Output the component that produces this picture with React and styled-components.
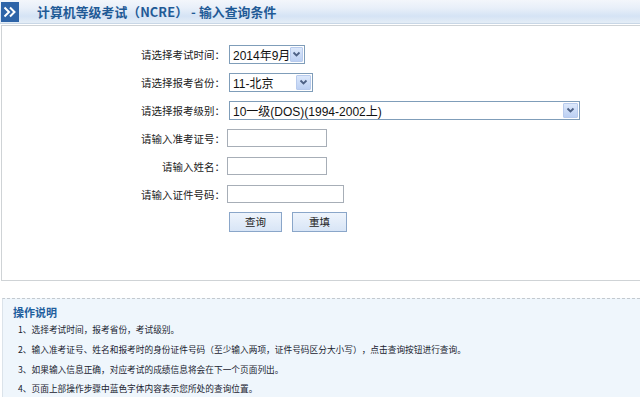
import React from "react";
import styled, { createGlobalStyle } from "styled-components";

const Global = createGlobalStyle`
  html, body { margin: 0; padding: 0; background: #fff; }
  body { width: 640px; height: 397px; overflow: hidden; font-family: "Liberation Sans", "Noto Sans CJK SC", sans-serif; text-spacing-trim: space-all; }
`;

const Page = styled.div`
  width: 640px;
  height: 397px;
  display: flex;
  flex-direction: column;
  overflow: hidden;
`;

const Header = styled.div`
  flex-shrink: 0;
  height: 24px;
  display: flex;
  align-items: center;
  background: linear-gradient(#f3f6fb 0%, #e8eff9 35%, #d5e3f5 70%, #e4edf6 100%);
  border-bottom: 1px solid #c9d7e6;
  box-sizing: border-box;
`;

const IconBox = styled.div`
  width: 18px;
  height: 20px;
  margin-left: 1px;
  background: #2e64a8;
  display: flex;
  align-items: center;
  justify-content: center;
`;

const Title = styled.h1`
  margin: 0 0 0 18px;
  font-family: "Noto Sans CJK SC", sans-serif;
  font-size: 12.8px;
  font-weight: 700;
  color: #1f5a96;
  letter-spacing: 0.1px;
  white-space: pre;
`;

const Main = styled.div`
  flex-shrink: 0;
  margin: 1px 0 0 1px;
  height: 256px;
  border: 1px solid #cfd3d6;
  border-right: none;
  box-sizing: border-box;
  padding-top: 14px;
`;

const Form = styled.div`
  display: grid;
  grid-template-columns: 224px 1fr;
  grid-auto-rows: 28px;
  align-items: center;
`;

const Label = styled.div`
  text-align: right;
  font-family: "Noto Sans CJK SC", sans-serif;
  font-size: 10.5px;
  color: #222;
  margin-right: 1px;
  white-space: nowrap;
`;

const Field = styled.div`
  display: flex;
  align-items: center;
  padding-left: ${(p) => p.$pl ?? 2}px;
  gap: 10px;
`;

const SelectBox = styled.div`
  width: ${(p) => p.$w}px;
  height: 19px;
  box-sizing: border-box;
  border: 1px solid #7f9db9;
  background: #fff;
  display: flex;
  align-items: center;
  justify-content: space-between;
  padding: 0 1px 0 3px;
`;

const SelectText = styled.span`
  font-family: "Liberation Sans", "Noto Sans CJK SC", sans-serif;
  font-size: 12px;
  color: #111;
  white-space: nowrap;
`;

const Arrow = styled.span`
  width: 15px;
  height: 15px;
  box-sizing: border-box;
  background: linear-gradient(#dce8fb, #bcd0f3);
  border: 1px solid #b8cbed;
  border-radius: 1px;
  display: flex;
  align-items: center;
  justify-content: center;
`;

const Input = styled.div`
  width: ${(p) => p.$w}px;
  height: 18px;
  box-sizing: border-box;
  border: 1px solid #a7aeb7;
  background: #fff;
`;

const Button = styled.button`
  width: ${(p) => p.$w}px;
  height: 20px;
  box-sizing: border-box;
  border: 1px solid #8aa6c9;
  background: linear-gradient(#eef4fc, #d8e5f6);
  font-family: "Noto Sans CJK SC", sans-serif;
  font-size: 10.5px;
  color: #222;
  padding: 0;
  margin: 0;
  line-height: 18px;
`;

const Help = styled.div`
  margin: 17px 0 0 2px;
  flex: 1;
  background: #eff6fc;
  border-top: 1px dashed #c3c9cf;
  border-left: 1px solid #dbe3ea;
  padding: 6px 0 0 10px;
`;

const HelpTitle = styled.div`
  font-family: "Noto Sans CJK SC", sans-serif;
  font-size: 11px;
  font-weight: 700;
  color: #1f5f9e;
  line-height: 15px;
`;

const List = styled.ol`
  list-style: none;
  margin: 0;
  padding: 0 0 0 5px;
  display: flex;
  flex-direction: column;
`;

const Item = styled.li`
  font-family: "Noto Sans CJK SC", sans-serif;
  font-size: 8.7px;
  color: #18222f;
  line-height: 19.8px;
  white-space: nowrap;
`;

const Chevron = () => (
  <svg width="9" height="7" viewBox="0 0 9 7">
    <path d="M1.5 1.5 L4.5 4.5 L7.5 1.5" fill="none" stroke="#4d6185" strokeWidth="1.8" />
  </svg>
);

const Select = ({ w, children }) => (
  <SelectBox $w={w}>
    <SelectText>{children}</SelectText>
    <Arrow>
      <Chevron />
    </Arrow>
  </SelectBox>
);

export default function App() {
  return (
    <Page>
      <Global />
      <Header>
        <IconBox>
          <svg width="14" height="12" viewBox="0 0 14 12">
            <path d="M1.5 1.5 L6 6 L1.5 10.5 M7 1.5 L11.5 6 L7 10.5" fill="none" stroke="#fff" strokeWidth="2" />
          </svg>
        </IconBox>
        <Title>计算机等级考试（NCRE） - 输入查询条件</Title>
      </Header>
      <Main>
        <Form>
          <Label>请选择考试时间：</Label>
          <Field $pl={3}>
            <Select w={76}>2014年9月</Select>
          </Field>
          <Label>请选择报考省份：</Label>
          <Field $pl={3}>
            <Select w={84}>11-北京</Select>
          </Field>
          <Label>请选择报考级别：</Label>
          <Field $pl={3}>
            <Select w={351}>10一级(DOS)(1994-2002上)</Select>
          </Field>
          <Label>请输入准考证号：</Label>
          <Field $pl={1}>
            <Input $w={100} />
          </Field>
          <Label>请输入姓名：</Label>
          <Field $pl={1}>
            <Input $w={100} />
          </Field>
          <Label>请输入证件号码：</Label>
          <Field $pl={1}>
            <Input $w={117} />
          </Field>
          <div />
          <Field $pl={3}>
            <Button $w={53}>查询</Button>
            <Button $w={55}>重填</Button>
          </Field>
        </Form>
      </Main>
      <Help>
        <HelpTitle>操作说明</HelpTitle>
        <List>
          <Item>1、选择考试时间，报考省份，考试级别。</Item>
          <Item>2、输入准考证号、姓名和报考时的身份证件号码（至少输入两项，证件号码区分大小写），点击查询按钮进行查询。</Item>
          <Item>3、如果输入信息正确，对应考试的成绩信息将会在下一个页面列出。</Item>
          <Item>4、页面上部操作步骤中蓝色字体内容表示您所处的查询位置。</Item>
        </List>
      </Help>
    </Page>
  );
}
